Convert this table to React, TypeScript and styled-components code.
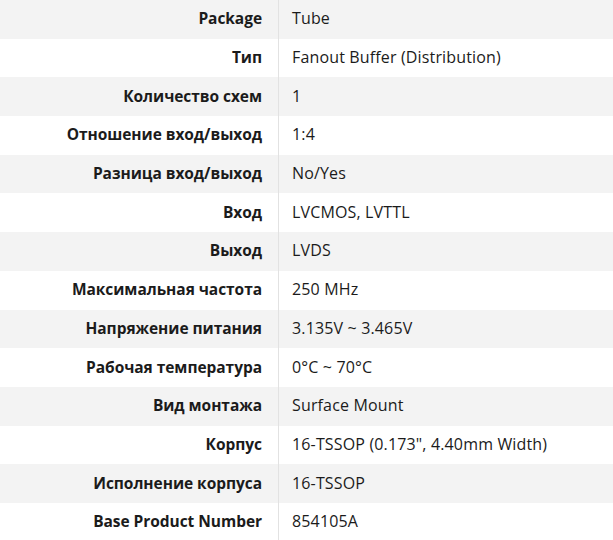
import React from "react";
import styled, { createGlobalStyle } from "styled-components";

const Global = createGlobalStyle`
  html, body { margin: 0; padding: 0; background: #ffffff; }
  body { font-family: "Open Sans", Roboto, sans-serif; color: #1b1b1b; }
`;

const Table = styled.div`
  display: flex;
  flex-direction: column;
  width: 613px;
`;

const Row = styled.div<{ $alt: boolean }>`
  display: grid;
  grid-template-columns: 278px 1px 1fr;
  height: 38.69px;
  background: ${(p) => (p.$alt ? "#f3f3f3" : "#ffffff")};
`;

const Label = styled.div`
  display: flex;
  align-items: center;
  justify-content: flex-end;
  padding-right: 16px;
  padding-bottom: 2px;
  font-size: 15.5px;
  font-weight: 700;
  letter-spacing: -0.05px;
  white-space: nowrap;
`;

const Divider = styled.div`
  background: #e2e2e2;
`;

const Value = styled.div`
  display: flex;
  align-items: center;
  padding-left: 13px;
  padding-bottom: 2px;
  font-size: 16px;
  font-weight: 400;
  letter-spacing: 0.15px;
  white-space: nowrap;
`;

const rows: [string, string][] = [
  ["Package", "Tube"],
  ["Тип", "Fanout Buffer (Distribution)"],
  ["Количество схем", "1"],
  ["Отношение вход/выход", "1:4"],
  ["Разница вход/выход", "No/Yes"],
  ["Вход", "LVCMOS, LVTTL"],
  ["Выход", "LVDS"],
  ["Максимальная частота", "250 MHz"],
  ["Напряжение питания", "3.135V ~ 3.465V"],
  ["Рабочая температура", "0°C ~ 70°C"],
  ["Вид монтажа", "Surface Mount"],
  ["Корпус", "16-TSSOP (0.173\", 4.40mm Width)"],
  ["Исполнение корпуса", "16-TSSOP"],
  ["Base Product Number", "854105A"],
];

export default function App() {
  return (
    <>
      <Global />
      <Table>
        {rows.map(([k, v], i) => (
          <Row key={k} $alt={i % 2 === 0}>
            <Label>{k}</Label>
            <Divider />
            <Value>{v}</Value>
          </Row>
        ))}
      </Table>
    </>
  );
}
